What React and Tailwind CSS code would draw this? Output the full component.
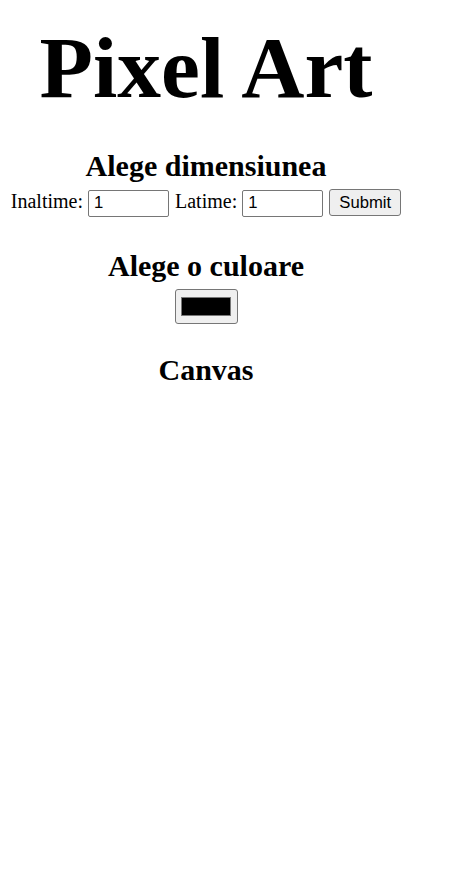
import React from "react";

export default function App() {
  return (
    <div className="min-h-[892px] bg-white text-black">
      <div className="w-[412px] text-center font-['Liberation_Serif',serif]">
        <h1 className="pt-[19px] text-[87.5px] leading-[97px] font-bold">Pixel Art</h1>
        <h2 className="mt-[33px] text-[30px] leading-[34px] font-bold">Alege dimensiunea</h2>
        <form
          className="mt-[5px] flex items-baseline justify-center text-[20px] leading-[27px]"
          onSubmit={(e) => e.preventDefault()}
        >
          <span>Inaltime:</span>
          <input
            type="number"
            defaultValue="1"
            className="ml-[5px] box-border h-[27px] w-[81px] rounded-[2px] border border-[#767676] bg-white pl-[5px] font-['Liberation_Sans',Arial,sans-serif] text-[16.67px] leading-[25px] text-black [appearance:textfield] [&::-webkit-inner-spin-button]:appearance-none [&::-webkit-outer-spin-button]:appearance-none"
          />
          <span className="ml-[6px]">Latime:</span>
          <input
            type="number"
            defaultValue="1"
            className="ml-[5px] box-border h-[27px] w-[81px] rounded-[2px] border border-[#767676] bg-white pl-[5px] font-['Liberation_Sans',Arial,sans-serif] text-[16.67px] leading-[25px] text-black [appearance:textfield] [&::-webkit-inner-spin-button]:appearance-none [&::-webkit-outer-spin-button]:appearance-none"
          />
          <button
            type="submit"
            className="ml-[6px] box-border h-[27px] w-[72px] rounded-[3px] border border-[#767676] bg-[#efefef] font-['Liberation_Sans',Arial,sans-serif] text-[16.67px] leading-[25px] text-black"
          >
            Submit
          </button>
        </form>
        <h2 className="mt-[32px] text-[30px] leading-[34px] font-bold">Alege o culoare</h2>
        <div className="mt-[6px] flex justify-center">
          <div className="box-border flex h-[35px] w-[63px] items-center justify-center rounded-[3px] border border-[#767676] bg-[#efefef]">
            <div className="box-border h-[19px] w-[50px] border border-[#777777] bg-black" />
          </div>
        </div>
        <h2 className="mt-[29px] text-[30px] leading-[34px] font-bold">Canvas</h2>
        <table className="mx-auto">
          <tbody></tbody>
        </table>
      </div>
    </div>
  );
}
